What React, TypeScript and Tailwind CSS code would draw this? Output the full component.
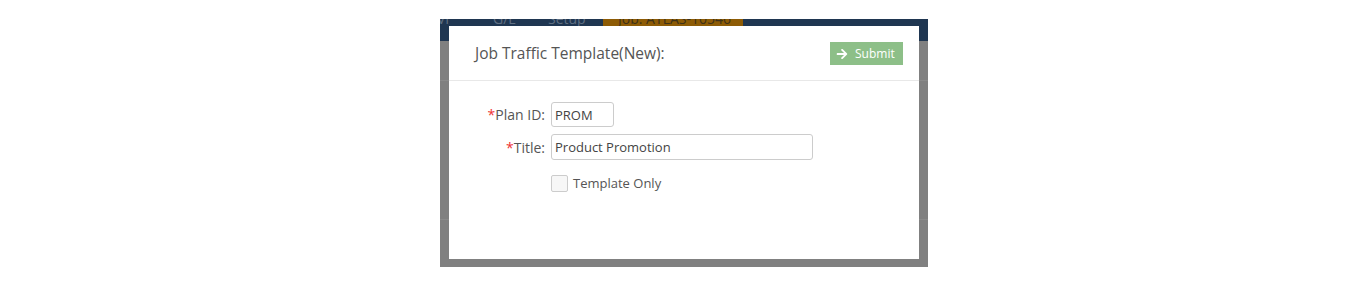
const font = { fontFamily: '"Open Sans", "Noto Sans", Arial, sans-serif' };

function BackdropNav() {
  // page nav behind the modal, dimmed by the overlay; only its lower edge shows
  return (
    <div className="h-[22px] bg-[#1f3651] flex overflow-hidden text-[14px] leading-[14px] text-[#5f6f82]">
      <span className="w-[56px] -ml-[3px] -mt-[7px]">VI</span>
      <span className="w-[55px] -mt-[7px]">G/L</span>
      <span className="w-[55px] -mt-[7px]">Setup</span>
      <div className="h-[22px] w-[140px] bg-[#8d5b05] text-[#3d3118] pl-[15px]">
        <span className="block -mt-[7px]">Job: ATLAS-10546</span>
      </div>
    </div>
  );
}

function ArrowIcon() {
  return (
    <svg width="12" height="12" viewBox="0 0 448 512" fill="currentColor">
      <path d="M190.5 66.9l22.2-22.2c9.4-9.4 24.6-9.4 33.9 0L441 239c9.4 9.4 9.4 24.6 0 33.9L246.6 467.3c-9.4 9.4-24.6 9.4-33.9 0l-22.2-22.2c-9.5-9.5-9.3-25 .4-34.3L311.4 296H24c-13.3 0-24-10.7-24-24v-32c0-13.3 10.7-24 24-24h287.4L190.9 101.2c-9.8-9.3-10-24.8-.4-34.3z" />
    </svg>
  );
}

export default function App() {
  return (
    <div className="w-[1367px] h-[283px] bg-white pt-[19px] pl-[440px]" style={font}>
      <div className="relative w-[488px] h-[248px] bg-[#808080] overflow-hidden">
        <BackdropNav />
        <div className="mt-[39px] h-px bg-[#8a8a8a]" />
        <div className="mt-[138px] h-px bg-[#8a8a8a]" />

        {/* ─── Modal ─────────────────────────────────────────── */}
        <div className="absolute left-[9px] top-[7px] w-[470px] h-[233px] bg-white">
          <div className="h-[55px] border-b border-[#e8e8e8] flex items-center justify-between pl-[26px] pr-[16px]">
            <h2 className="text-[15.5px] text-[#555] pt-[1px]">Job Traffic Template(New):</h2>
            <button className="h-[23px] w-[73px] mt-[1px] bg-[#8dbf88] text-white text-[12px] flex items-center gap-[7px] pl-[6px]">
              <ArrowIcon />
              <span>Submit</span>
            </button>
          </div>

          <div className="pt-[21px] grid grid-cols-[96px_1fr] gap-x-[6px] gap-y-[7px] items-center text-[#555]">
            <label className="text-right text-[14px]">
              <span className="text-[#e33]">*</span>Plan ID:
            </label>
            <input
              defaultValue="PROM"
              className="w-[63px] h-[25px] border border-[#ccc] rounded-[3px] px-[3px] text-[13px] text-[#444] outline-none"
            />
            <label className="text-right text-[14px]">
              <span className="text-[#e33]">*</span>Title:
            </label>
            <input
              defaultValue="Product Promotion"
              className="w-[262px] h-[26px] border border-[#ccc] rounded-[3px] px-[3px] text-[13px] text-[#444] outline-none"
            />
            <div />
            <div className="flex items-center gap-[5px] mt-[7px]">
              <span className="w-[17px] h-[17px] border border-[#ccc] bg-[#f7f7f7] rounded-[2px]" />
              <span className="text-[13px]">Template Only</span>
            </div>
          </div>
        </div>
      </div>
    </div>
  );
}
